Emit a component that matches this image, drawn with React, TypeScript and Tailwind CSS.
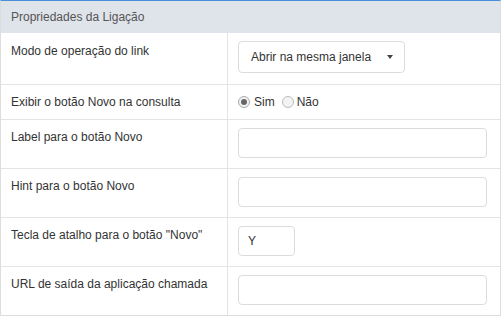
export default function App() {
  const rows: { label: string; field: 'select' | 'radio' | 'text' | 'short' }[] = [
    { label: 'Modo de operação do link', field: 'select' },
    { label: 'Exibir o botão Novo na consulta', field: 'radio' },
    { label: 'Label para o botão Novo', field: 'text' },
    { label: 'Hint para o botão Novo', field: 'text' },
    { label: 'Tecla de atalho para o botão "Novo"', field: 'short' },
    { label: 'URL de saída da aplicação chamada', field: 'text' },
  ];

  const renderField = (field: string) => {
    if (field === 'select') {
      return (
        <div className="flex h-[32px] w-[167px] items-center justify-between rounded border border-[#dcdcdc] bg-white pl-[12px] pr-[11px]">
          <span>Abrir na mesma janela</span>
          <span className="h-0 w-0 border-x-[3px] border-t-[4px] border-x-transparent border-t-[#444]" />
        </div>
      );
    }
    if (field === 'radio') {
      return (
        <div className="flex items-center">
          <span className="flex h-[12px] w-[12px] items-center justify-center rounded-full border border-[#aaa] bg-[#f3f3f3]">
            <span className="h-[6px] w-[6px] rounded-full bg-[#666]" />
          </span>
          <span className="ml-[4px]">Sim</span>
          <span className="ml-[7px] h-[12px] w-[12px] rounded-full border border-[#bbb] bg-[#f3f3f3]" />
          <span className="ml-[3px]">Não</span>
        </div>
      );
    }
    if (field === 'short') {
      return (
        <div className="flex h-[30px] w-[57px] items-center rounded border border-[#dcdcdc] bg-white pl-[9px]">Y</div>
      );
    }
    return <div className="h-[30px] w-[249px] rounded border border-[#dcdcdc] bg-white" />;
  };

  return (
    <div
      className="h-[317px] w-[501px] bg-white text-[12px] text-[#333]"
      style={{ fontFamily: '"Liberation Sans", Arial, sans-serif' }}
    >
      <div className="border-x border-b border-t border-[#dddddd] border-t-[#4a90d9]">
        <div className="flex h-[32px] items-center bg-[#dfe3ea] pl-[10px] text-[#555]">Propriedades da Ligação</div>
        {rows.map((row, i) => {
          const tall = row.field !== 'radio';
          return (
            <div
              key={row.label}
              className={`flex ${i === 0 ? 'h-[51px]' : 'border-t border-[#e4e4e4]'} ${tall ? (i === 0 ? '' : 'h-[49px]') : 'h-[35px]'}`}
            >
              <div className={`w-[227px] shrink-0 border-r border-[#e4e4e4] pl-[10px] ${tall ? (i === 0 ? 'pt-[9px]' : 'pt-[8px]') : 'flex items-center'}`}>
                {row.label}
              </div>
              <div className={`flex-1 pl-[10px] ${tall ? 'pt-[8px]' : 'flex items-center'}`}>
                {renderField(row.field)}
              </div>
            </div>
          );
        })}
      </div>
    </div>
  );
}
